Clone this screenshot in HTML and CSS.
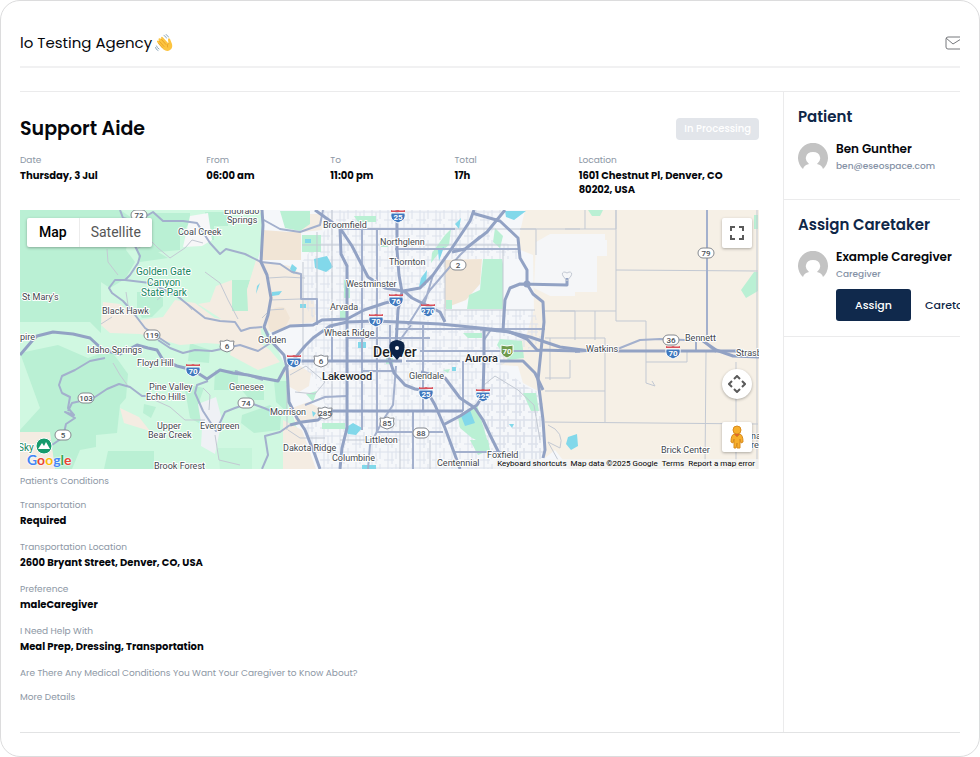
FILE: index.html
```html
<!DOCTYPE html>
<html lang="en">
<head>
  <meta charset="UTF-8" />
  <meta name="viewport" content="width=device-width, initial-scale=1.0"/>
  <title>Support Aide</title>
  <link rel="stylesheet" href="styles.css">
</head>
<body>
  <div class="page">
    <header class="topbar">
      <h1>lo Testing Agency
        <svg class="wave" viewBox="0 0 36 36" role="img" aria-label="waving hand">
          <path d="M4 16Q3 12 7 13L9 15 7 11Q7 7 11 9L13 11 12 8Q13 4 16 7L27 19 26 11Q27 7 30 10L34 20Q36 28 30 32Q24 36 17 31Z" fill="#fcc440"/>
          <path d="M13 11L22 21M9 15L18 25M7 19L15 28M27 19Q23 21 25 26" fill="none" stroke="#e39a22" stroke-width="1.500" stroke-linecap="round"/>
          <path d="M18 3Q22 4 23 8M22 1Q26 3 27 6M3 24Q4 28 8 30M1 27Q2 32 6 33" fill="none" stroke="#8fa9bd" stroke-width="2" stroke-linecap="round"/>
        </svg>
      </h1>
      <a class="mail" href="#" aria-label="Messages">
        <svg viewBox="0 0 15 14" width="15" height="14">
          <rect x="1" y="1" width="17" height="12" rx="2"/>
          <path d="M1 2L8 8 16 3"/>
        </svg>
      </a>
    </header>

    <div class="layout">
      <main class="job">
        <div class="job-head">
          <h2>Support Aide</h2>
          <span class="badge">In Processing</span>
        </div>

        <dl class="facts">
          <div><dt>Date</dt><dd>Thursday, 3 Jul</dd></div>
          <div><dt>From</dt><dd>06:00 am</dd></div>
          <div><dt>To</dt><dd>11:00 pm</dd></div>
          <div><dt>Total</dt><dd>17h</dd></div>
          <div><dt>Location</dt><dd>1601 Chestnut Pl, Denver, CO<br>80202, USA</dd></div>
        </dl>

        <div class="map">
          <svg class="map-canvas" viewBox="20 210 739 259" preserveAspectRatio="xMidYMid slice">
            <defs>
              <pattern id="streets" width="16" height="16" patternUnits="userSpaceOnUse">
                <path d="M0 4H16M0 12H10M4 0V16M12 0V11M8 4V16" stroke="#dce1eb" stroke-width="1" fill="none"/>
              </pattern>
              <g id="interstate">
                <path d="M-7 -3Q-8 3 -4 5L0 7 4 5Q8 3 7 -3Z" fill="#3f78be" stroke="#fff"/>
                <path d="M-7 -6Q-4 -5 0 -6Q4 -5 7 -6V-4H-7Z" fill="#d9505a"/>
              </g>
              <rect id="state" x="-8" y="-5" width="16" height="10" rx="5"/>
              <path id="us" d="M-7 -5Q-3 -4 0 -6Q3 -4 7 -5Q6 -2 7 1Q7 4 3 5L0 6-3 5Q-7 4 -7 1Q-6 -2 -7 -5Z"/>
            </defs>

            <!-- land -->
            <rect x="20" y="210" width="739" height="259" fill="#f5f7fa"/>
            <path d="M20 210H262L263 240 250 290 268 330 285 365 288 400 310 469H20Z" fill="#d0f8e1"/>
            <g fill="#baf0d4">
              <path d="M20 210H120L132 218 126 250 135 262 125 279 110 288 101 282V333L90 322H20Z"/>
              <path d="M143 213H190V222L180 236 180 250 158 252 168 258 140 262 135 246 138 226Z"/>
              <path d="M137 292H163V306L152 317 142 318 137 310Z"/>
              <path d="M20 353L58 345 88 358 110 350 118 360 128 374 126 398 120 405 117 433 96 435 96 447 80 450 72 469H20V430L40 408Z"/>
              <path d="M232 280H250V311H232ZM205 212H228V226H214V240H205Z"/>
              <path d="M184 384L204 388 199 402 216 410 204 426 190 418ZM144 404L156 407 151 418 143 413Z"/>
              <path d="M215 370H238V390H214ZM240 388H264V400H250ZM242 415L270 405 281 417 280 430 254 433 241 423ZM274 381H287V412L276 402Z"/>
              <path d="M108 451H154V469H104ZM190 343L210 350 209 363 188 361Z"/>
              <path d="M218 448H252V469H220Z" opacity=".5"/>
            </g>
            <g fill="#f4ece2">
              <path d="M103 302L120 304 132 314 140 320 163 317 175 300 195 303 215 318 235 321 246 328 260 322 262 340 235 345 205 343 180 345 140 334 110 333 101 325Z"/>
              <path d="M198 304L210 302 216 286 232 280V311L250 311 247 290 256 262 263 262 270 300 265 328 240 331Z"/>
              <path d="M256 260L290 266 301 274V299L314 301 316 322 290 325 264 332 266 316 248 311 247 290Z"/>
              <path d="M120 408L139 417 150 431 140 428 124 423ZM20 432H50L55 469H20Z"/>
              <path d="M232 345L256 340 270 350 280 362 258 370 230 355ZM283 420L302 430 316 469H283Z"/>
              <path d="M284 372L300 366 311 373 309 386 299 392 288 386ZM292 408L308 402 320 408 316 422 296 424Z"/>
              <path d="M301 214H320L322 230 302 232Z"/>
            </g>
            <g fill="#f1e5d6">
              <path d="M262 230L290 232 301 231V260L262 260Z"/>
              <path d="M267 318Q272 304 285 308L290 318 284 330 270 332Z"/>
              <path d="M445 260L482 259 480 284 466 300 445 308Z"/>
            </g>
            <path d="M525 210H759V469H570L555 450 545 458 543 425 538 391 523 383 518 366 500 365 510 343 525 339 534 310 533 255 518 249 520 232Z" fill="#f6f0e6"/>
            <path d="M536 242L550 234H605V240H607V256H597V292H575V296H550L534 288Z" fill="#f5f6f8"/>
            <path d="M190 216L208 213 212 240 202 246 183 247Z" fill="#f7f7f8"/>
            <path d="M198 404L216 397 222 420 215 454 201 446 202 428Z" fill="#eff1f5"/>

            <!-- city blocks -->
            <path d="M302 262L325 230 323 210H505L490 235 518 249V259H445V310H534L543 340 500 366 543 400V469H322L303 430 325 405 312 375 300 365 317 325 301 299Z" fill="url(#streets)"/>
            <path d="M506 372L520 383 538 392 543 425 545 458 510 466 485 425 484 385Z" fill="url(#streets)"/>

            <!-- parks -->
            <g fill="#baf0d4">
              <path d="M483 259L502 259 503 264V309H467L469 295 480 290 481 278Z"/>
              <path d="M458 417L477 405 489 446 472 438 460 428Z"/>
              <path d="M523 393H536L539 411H531ZM500 339L522 341 524 358 508 360 497 345Z"/>
              <path d="M302 235H321V252H302ZM280 211H310V224L300 231 285 228Z"/>
              <path d="M445 235L451 229 449 245 438 254 431 263 432 253ZM446 300H452V309H446ZM495 228L503 236 500 248 493 242Z"/>
              <path d="M354 216H376V222H358ZM381 239H388V247H381ZM322 423H345V429H322ZM386 358H393V364H386ZM340 310H346V318H340Z"/>
              <path d="M741 290L754 272H758V291L746 298ZM754 215H758V229H754ZM588 210H603L600 216H592ZM463 333H482V338H468Z"/>
              <path d="M306 394L317 391 313 402ZM344 280H350V298H344ZM443 370L450 369 448 373ZM470 440L488 440 490 450 478 455Z"/>
            </g>
            <g fill="#82d8ea">
              <path d="M314 259L327 256 333 267 326 272 315 268ZM461 416L470 410 475 423 465 426ZM345 428L353 423 362 428 356 435 348 434Z"/>
              <path d="M505 211H526L514 220 506 217ZM568 437L577 434 578 446 571 450 566 444ZM305 239H311V243H305ZM292 264L297 268 294 274 290 269Z"/>
              <path d="M421 278L427 270 426 285 419 287ZM438 250L444 247 439 261ZM455 224L461 218 459 229ZM257 286L260 283 256 294ZM272 292L282 291 279 295 272 296Z"/>
              <path d="M300 304H306V308H300ZM358 342H366V348H358ZM509 424L514 424 512 428ZM452 367H456V371H452ZM362 465H376V469H362ZM312 411L316 413 313 417Z"/>
            </g>

            <!-- county roads -->
            <g class="minor">
              <path d="M107 249L108 262 118 275M126 292L128 305M101 324L112 317M205 272L220 283 228 300 238 319M113 363L120 375 128 386M150 398L170 407 185 420 205 420M203 388L210 395 209 410M215 435L219 460 240 465"/>
              <path d="M136 250L150 240 158 248 170 258 185 248 192 240 203 243M157 300L172 288 192 310M268 278L285 277 305 278M270 300L300 299M262 318L270 310 284 309"/>
              <path d="M565 229H616V210M585 210V229M616 210V321H646V383L655 386 652 381M616 270L758 271M560 311H616M595 311V340M605 338V422M545 391H605M545 422L758 424M706 352L705 469M736 362V469M757 210V469M646 362H687V352M575 311V340M536 255V229H520M545 311H575M545 338H605M550 338V380M570 360V378H545"/>
              <path d="M548 425Q565 432 560 448L548 442 558 460M287 385L287 430M303 262V365M317 232V300M332 210V420M302 245H520M445 259V320M503 249V330M445 310H535M340 229H580"/>
              <path d="M484 385L495 376 518 390 534 405 540 440M290 375L306 366 325 382 315 394 295 392M288 430L300 438 325 438M340 440H400M400 420V469M430 440V469"/>
            </g>

            <!-- arterials -->
            <g class="road thin">
              <path d="M120 210L123 218 135 221 135 246 140 256 138 263 130 275 125 280 115 280 109 288 112 293 123 301 132 311 145 328 158 337 170 345"/>
              <path d="M143 218L153 212 163 221 183 221 197 223 210 243 220 254 226 249 245 254 261 262 280 264 292 272 301 274V299H317V325"/>
              <path d="M125 280L150 283 177 296 205 318 220 321 235 322 241 331 250 328 262 327"/>
              <path d="M158 340L170 348 183 353 195 350 212 351 240 345 258 351 275 340M105 358L90 361 75 370 62 376 59 385 62 393 70 397 68 408 74 415 65 412 75 418 66 424 64 433 62 438 52 445"/>
              <path d="M68 411L72 403 85 400 95 397 107 389 119 384 130 387 142 396 160 396"/>
              <path d="M208 381L197 385 195 393 203 411 216 431 225 412 235 408 250 403 264 408 278 414M263 380L235 371"/>
              <path d="M262 219L280 229 300 232 320 225 323 210M290 425L280 432 265 436 268 455 262 469"/>
              <path d="M340 229H455M395 249H518M362 229V430M377 229V345M332 325V361M390 325V350M395 329H545M363 371H395M305 405L325 397 347 396M420 351H540M377 345V432H443M423 325V411M463 361V411M413 412V469M453 452H505M347 338H430M406 361H460"/>
              <path d="M396 366L393 405 383 420 370 445 368 469M484 328L484 340 492 328M480 236L460 255 430 290 408 325M411 325L400 340M433 275L424 305"/>
              <path d="M575 352L620 348 640 340 660 339 685 340 703 341 716 352M696 340V352"/>
              <path d="M707 210V337"/>
            </g>
            <g class="road">
              <path d="M20 355L32 341 37 336 53 332 73 334 90 338 103 350 120 354 137 345 148 348 157 350 163 360 177 366 193 370 207 379 220 370 233 373 248 375 262 378 278 381 285 368 295 358 305 346 313 338 330 326 347 322 376 321 440 324 500 330 530 337 560 347 590 351H735L759 353"/>
              <path d="M262 210L263 225 261 262 267 275 271 298 268 315 264 327 270 340 284 355 287 368 288 385 289 402 297 418 305 430 315 455 320 469"/>
              <path d="M315 210L340 228 352 246 368 277 385 288 403 291 420 288 433 275 450 251 470 221 474 210M340 228L341 254 347 266V428L342 448 340 469"/>
              <path d="M272 334L290 326 313 325 322 320 347 319 364 310 385 303 398 300M295 361H402M290 425L302 422 318 420 328 411H463"/>
              <path d="M397 210V250L399 275 402 292 398 310 396 345 388 355 394 373 405 385 415 389 427 391 435 405 445 428 455 455 460 469"/>
              <path d="M505 210L487 232 465 249 452 252M404 291L412 298 428 306 440 312 445 322M472 213L500 221 518 238 520 258 527 270V284L533 294 543 302 544 322 538 380 543 420 545 450 543 458"/>
              <path d="M503 330L505 300 510 288 520 284 567 285V278M484 328V360L483 395 477 405 460 416 443 425M421 372L445 378 460 398 475 408 483 420 490 435 500 455M480 329L510 332 527 339 537 350 580 351M500 361H523L535 373 543 390"/>
              <path d="M703 341L716 350 733 356 759 357"/>
            </g>
            <circle cx="527" cy="284" r="2" class="road"/>
            <path d="M563 276Q561 272 565 272 567 274 569 272 573 272 571 276L567 281Z" class="minor"/>

            <!-- route shields -->
            <g class="route">
              <g transform="translate(398 216)"><use href="#interstate"/><text y="4">25</text></g>
              <g transform="translate(396 300)"><use href="#interstate"/><text y="4">76</text></g>
              <g transform="translate(428 310)"><use href="#interstate"/><text y="4">270</text></g>
              <g transform="translate(376 320)"><use href="#interstate"/><text y="4">70</text></g>
              <g transform="translate(193 370)"><use href="#interstate"/><text y="4">70</text></g>
              <g transform="translate(294 361)"><use href="#interstate"/><text y="4">70</text></g>
              <g transform="translate(426 393)"><use href="#interstate"/><text y="4">25</text></g>
              <g transform="translate(483 395)"><use href="#interstate"/><text y="4">225</text></g>
              <g transform="translate(673 352)"><use href="#interstate"/><text y="4">70</text></g>
              <g transform="translate(507 351)"><path d="M-6 -6Q0 -4 6 -6V2Q4 6 0 7Q-4 6 -6 2Z" fill="#6f9a4b" stroke="#fff"/><text y="3">70</text></g>
            </g>
            <g class="route plain">
              <g transform="translate(139 215)"><use href="#state"/><text y="3">72</text></g>
              <g transform="translate(152 335)"><use href="#state"/><text y="3">119</text></g>
              <g transform="translate(86 398)"><use href="#state"/><text y="3">103</text></g>
              <g transform="translate(63 435)"><use href="#state"/><text y="3">5</text></g>
              <g transform="translate(246 403)"><use href="#state"/><text y="3">74</text></g>
              <g transform="translate(458 265)"><use href="#state"/><text y="3">2</text></g>
              <g transform="translate(421 433)"><use href="#state"/><text y="3">88</text></g>
              <g transform="translate(706 253)"><use href="#state"/><text y="3">79</text></g>
              <g transform="translate(671 340)"><use href="#state"/><text y="3">36</text></g>
              <g transform="translate(227 346)"><use href="#us"/><text y="3">6</text></g>
              <g transform="translate(321 361)"><use href="#us"/><text y="3">6</text></g>
              <g transform="translate(325 413)"><use href="#us"/><text y="3">285</text></g>
              <g transform="translate(387 423)"><use href="#us"/><text y="3">85</text></g>
            </g>

            <!-- places -->
            <g class="place">
              <text x="224" y="214">Eldorado</text><text x="227" y="223">Springs</text>
              <text x="178" y="235">Coal Creek</text>
              <text x="323" y="228">Broomfield</text>
              <text x="380" y="245">Northglenn</text>
              <text x="389" y="265">Thornton</text>
              <text x="346" y="287">Westminster</text>
              <text x="330" y="310">Arvada</text>
              <text x="324" y="336">Wheat Ridge</text>
              <text x="258" y="343">Golden</text>
              <text x="22" y="300">St Mary's</text>
              <text x="102" y="314">Black Hawk</text>
              <text x="20" y="340">pire</text>
              <text x="87" y="353">Idaho Springs</text>
              <text x="137" y="366">Floyd Hill</text>
              <text x="149" y="390">Pine Valley</text><text x="146" y="400">Echo Hills</text>
              <text x="157" y="429">Upper</text><text x="148" y="438">Bear Creek</text>
              <text x="200" y="429">Evergreen</text>
              <text x="154" y="469">Brook Forest</text>
              <text x="229" y="390">Genesee</text>
              <text x="270" y="415">Morrison</text>
              <text x="283" y="451">Dakota Ridge</text>
              <text x="332" y="461">Columbine</text>
              <text x="365" y="443">Littleton</text>
              <text x="409" y="379">Glendale</text>
              <text x="487" y="458">Foxfield</text>
              <text x="437" y="466">Centennial</text>
              <text x="586" y="352">Watkins</text>
              <text x="685" y="341">Bennett</text>
              <text x="736" y="356">Strasb</text>
              <text x="661" y="453">Brick Center</text>
              <text x="751" y="439">na</text><text x="751" y="448">re</text>
              <text x="322" y="380" class="town">Lakewood</text>
              <text x="465" y="362" class="town">Aurora</text>
              <text x="373" y="357" class="city">Denver</text>
              <text x="136" y="275" class="park">Golden Gate</text>
              <text x="147" y="286" class="park">Canyon</text>
              <text x="141" y="296" class="park">State Park</text>
              <text x="18" y="451" class="park">Sky</text>
            </g>
            <circle cx="44" cy="446" r="8" fill="#159a6c" stroke="#fff"/>
            <path d="M38 449L42 443 44 446 46 442 50 449Z" fill="#fff"/>

            <!-- job marker -->
            <path d="M397 360L391 353Q386 341 397 340Q408 341 403 353Z" fill="#0b2347"/>
            <circle cx="397" cy="348" r="2" fill="#fff"/>
          </svg>

          <div class="map-type">
            <button type="button" class="active">Map</button>
            <button type="button">Satellite</button>
          </div>
          <button type="button" class="map-btn fullscreen" aria-label="Toggle fullscreen view">
            <svg viewBox="0 0 14 14" width="14" height="14"><path d="M1 5V1H5M9 1H13V5M13 9V13H9M5 13H1V9"/></svg>
          </button>
          <div class="map-tools">
            <button type="button" class="map-btn round" aria-label="Map camera controls">
              <svg viewBox="0 0 18 18" width="18" height="18"><path d="M6 4L9 1 12 4M6 14L9 17 12 14M4 6L1 9 4 12M14 6L17 9 14 12"/></svg>
            </button>
            <button type="button" class="map-btn" aria-label="Street View">
              <svg class="pegman" viewBox="0 0 14 24" width="14" height="24">
                <path d="M4 9H10Q13 10 13 17L11 18 10 14 10 23H7L7 18 6 23H4L4 14 3 18 1 17Q1 10 4 9Z"/>
                <circle cx="7" cy="5" r="4"/>
                <path class="shade" d="M4 9L7 12 10 9"/>
              </svg>
            </button>
          </div>
          <div class="google" aria-label="Google"><i class="blue">G</i><i class="red">o</i><i class="yellow">o</i><i class="blue">g</i><i class="green">l</i><i class="red">e</i></div>
          <div class="map-credit">
            <a href="#">Keyboard shortcuts</a>
            <span>Map data ©2025 Google</span>
            <a href="#">Terms</a>
            <a href="#">Report a map error</a>
          </div>
        </div>

        <div class="conditions">
          <p>Patient’s Conditions</p>
          <dl>
            <div><dt>Transportation</dt><dd>Required</dd></div>
            <div><dt>Transportation Location</dt><dd>2600 Bryant Street, Denver, CO, USA</dd></div>
            <div><dt>Preference</dt><dd>maleCaregiver</dd></div>
            <div><dt>I Need Help With</dt><dd>Meal Prep, Dressing, Transportation</dd></div>
          </dl>
          <p>Are There Any Medical Conditions You Want Your Caregiver to Know About?</p>
          <p>More Details</p>
        </div>
      </main>

      <aside class="side">
        <section>
          <h3>Patient</h3>
          <div class="person">
            <svg class="avatar" viewBox="0 0 30 30"><path d="M5 26A15 15 0 1 1 25 26Q24 22 19 21 23 18 22 14 21 9 15 9 9 9 8 14 7 18 11 21 6 22 5 26Z"/></svg>
            <div>
              <strong>Ben Gunther</strong>
              <small>ben@eseospace.com</small>
            </div>
          </div>
        </section>
        <section>
          <h3>Assign Caretaker</h3>
          <div class="person">
            <svg class="avatar" viewBox="0 0 30 30"><path d="M5 26A15 15 0 1 1 25 26Q24 22 19 21 23 18 22 14 21 9 15 9 9 9 8 14 7 18 11 21 6 22 5 26Z"/></svg>
            <div>
              <strong>Example Caregiver</strong>
              <small>Caregiver</small>
              <div class="actions">
                <button type="button" class="assign">Assign</button>
                <a href="#">Careta</a>
              </div>
            </div>
          </div>
        </section>
      </aside>
    </div>
  </div>
</body>
</html>
```

FILE: styles.css
```css
* {
  box-sizing: border-box;
}
body {
  margin: 0;
  font-family: Poppins, Inter, sans-serif;
  color: #05070c;
  background-color: #fff;
}
h1, h2, h3, p, dl, dd {
  margin: 0;
}
button {
  font-family: inherit;
  border: 0;
  cursor: pointer;
}
a {
  color: inherit;
  text-decoration: none;
}
svg {
  display: block;
}
.page {
  display: flex;
  flex-direction: column;
  min-height: 100vh;
  padding: 18px 19px 23px;
  border: 1px solid #dcdcdd;
  border-radius: 20px;
}

/* top bar */
.topbar {
  display: flex;
  justify-content: space-between;
  align-items: center;
  height: 49px;
  border-bottom: 2px solid #f1f1f2;
}
.topbar h1 {
  display: flex;
  align-items: center;
  gap: 3px;
  font-size: 15px;
  font-weight: 400;
}
.wave {
  width: 18px;
  height: 18px;
}
.mail svg {
  fill: none;
  stroke: #77797d;
  stroke-width: 1;
}

/* layout */
.layout {
  display: flex;
  flex: 1;
  margin-top: 23px;
  border-top: 1px solid #ebebec;
  border-bottom: 1px solid #e2e3e4;
}
.job {
  flex: 1;
  min-width: 0;
  padding: 26px 24px 28px 0;
}
.side {
  flex: 0 0 177px;
  overflow: hidden;
  border-left: 1px solid #ebebec;
}

/* job */
.job-head {
  display: flex;
  justify-content: space-between;
  align-items: center;
}
.job-head h2 {
  font-size: 19px;
  line-height: 22px;
  font-weight: 600;
}
.badge {
  padding: 0 8px;
  border-radius: 4px;
  background-color: #e2e5ea;
  color: #fff;
  font-size: 10px;
  line-height: 22px;
  font-weight: 500;
}
.facts {
  display: grid;
  grid-template-columns: 25.2% 16.8% 16.8% 16.8% 1fr;
  margin: 13px 0 11px;
}
dt, .conditions p {
  font-size: 9px;
  line-height: 14px;
  color: #8d97a5;
}
dd {
  padding: 2px 0;
  font-size: 10px;
  line-height: 14px;
  font-weight: 700;
  white-space: nowrap;
}
.conditions, .conditions dl {
  display: flex;
  flex-direction: column;
  gap: 10px;
}
.conditions {
  margin-top: 5px;
}

/* map */
.map {
  position: relative;
  height: 259px;
  overflow: hidden;
  font-family: Roboto, sans-serif;
}
.map-canvas {
  width: 100%;
  height: 100%;
}
.minor {
  fill: none;
  stroke: #c3c9d3;
  stroke-width: 1;
}
.road {
  fill: none;
  stroke: #92a2c4;
  stroke-width: 3;
  stroke-linejoin: round;
}
.thin {
  stroke: #a3b0cd;
  stroke-width: 2;
}
.route text {
  fill: #fff;
  font-size: 8px;
  font-weight: 700;
  text-anchor: middle;
}
.plain use {
  fill: #fff;
  stroke: #85898f;
}
.plain text {
  fill: #4a4e54;
  font-weight: 500;
}
.place text {
  fill: #43474d;
  font-size: 9px;
  paint-order: stroke;
  stroke: #fff;
  stroke-width: 2px;
  stroke-linejoin: round;
}
.place .town {
  fill: #24272b;
  font-size: 11px;
  font-weight: 500;
}
.place .city {
  fill: #1d1f23;
  font-size: 14px;
  font-weight: 500;
}
.place .park {
  fill: #17875f;
  font-size: 10px;
}
.map-type {
  position: absolute;
  top: 8px;
  left: 7px;
  display: flex;
  background-color: #fff;
  border-radius: 2px;
  box-shadow: 0 1px 3px rgba(0, 0, 0, 0.3);
}
.map-type button {
  padding: 0 11px;
  background: none;
  font-size: 14px;
  line-height: 29px;
  color: #565656;
}
.map-type .active {
  padding: 0 12px;
  border-right: 1px solid #ececec;
  font-weight: 500;
  color: #000;
}
.map-btn {
  display: grid;
  place-items: center;
  width: 30px;
  height: 30px;
  padding: 0;
  background-color: #fff;
  border-radius: 2px;
  box-shadow: 0 1px 3px rgba(0, 0, 0, 0.3);
}
.map-btn svg {
  fill: none;
  stroke: #5a5a5a;
  stroke-width: 2;
}
.map-btn .pegman {
  fill: #f7ae2b;
  stroke: #d98b1d;
  stroke-width: 1;
}
.map-btn .shade {
  fill: #e0662a;
}
.fullscreen {
  position: absolute;
  top: 8px;
  right: 7px;
}
.map-tools {
  position: absolute;
  right: 7px;
  bottom: 17px;
  display: grid;
  gap: 23px;
}
.map-tools .round {
  border-radius: 50%;
}
.google {
  position: absolute;
  left: 7px;
  bottom: 0;
  font-family: Lato, sans-serif;
  font-size: 14px;
  line-height: 18px;
  font-weight: 700;
  text-shadow: 0 0 2px #fff, 0 0 2px #fff;
}
.google i {
  font-style: normal;
}
.blue {
  color: #4285f4;
}
.red {
  color: #ea4335;
}
.yellow {
  color: #fbbc05;
}
.green {
  color: #34a853;
}
.map-credit {
  position: absolute;
  right: 0;
  bottom: 0;
  display: flex;
  gap: 4px;
  padding: 0 4px;
  background-color: rgba(245, 245, 245, 0.7);
  font-size: 8px;
  line-height: 10px;
  color: #000;
}

/* sidebar */
.side section {
  padding: 15px 0 15px 14px;
  border-bottom: 1px solid #ebebec;
}
.side section:first-child {
  padding-bottom: 25px;
}
.side h3 {
  margin-bottom: 13px;
  font-size: 15px;
  line-height: 20px;
  font-weight: 600;
  color: #0f2748;
}
.person {
  display: flex;
  gap: 8px;
  white-space: nowrap;
}
.avatar {
  flex: none;
  width: 30px;
  height: 30px;
  margin-top: 3px;
  fill: #c3c3c3;
}
.person strong, .person small {
  display: block;
}
.person strong {
  font-size: 12px;
  line-height: 18px;
  font-weight: 600;
}
.person small {
  font-size: 9px;
  line-height: 16px;
  font-weight: 500;
  color: #8592a6;
}
.actions {
  display: flex;
  align-items: center;
  gap: 14px;
  margin-top: 7px;
  font-size: 11px;
  font-weight: 500;
  color: #0f2748;
}
.assign {
  width: 75px;
  height: 32px;
  border-radius: 3px;
  background-color: #10294c;
  color: #fff;
  font-size: 11px;
  font-weight: 500;
}
```
